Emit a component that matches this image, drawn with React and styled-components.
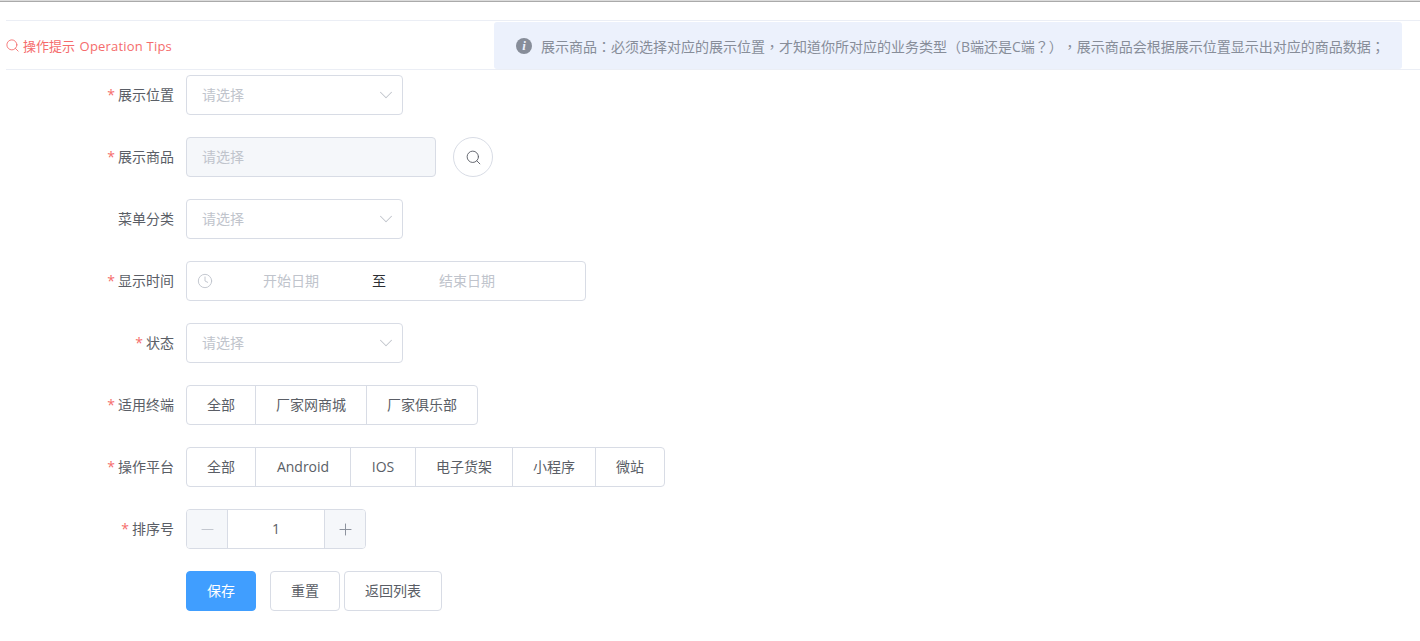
import styled, { createGlobalStyle } from "styled-components";
import { Search, ChevronDown, Clock, Minus, Plus } from "lucide-react";

const GlobalStyle = createGlobalStyle`
  html, body {
    margin: 0;
    padding: 0;
    background: #fff;
  }
  body {
    font-family: "Open Sans", "Noto Sans CJK SC", sans-serif;
    font-size: 14px;
    color: #606266;
    text-spacing-trim: space-all;
  }
  * {
    box-sizing: border-box;
  }
`;

const Page = styled.div`
  height: 641px;
  overflow: hidden;
  border-top: 1px solid #dcdcdc;
`;

const TopLine = styled.div`
  height: 1px;
  background: #aaa;
`;

const TipsBar = styled.div`
  display: flex;
  align-items: center;
  justify-content: space-between;
  height: 50px;
  margin: 18px 0 5px 6px;
  padding: 1px 18px 0 0;
  border-top: 1px solid #ebeef5;
  border-bottom: 1px solid #ebeef5;
`;

const TipsTitle = styled.div`
  display: flex;
  align-items: center;
  gap: 3px;
  margin-left: -1px;
  color: #f56c6c;
  font-size: 13px;
  line-height: 18px;
`;

const TipsLatin = styled.span`
  margin-left: 1px;
  letter-spacing: 0.2px;
`;

const Alert = styled.div`
  display: flex;
  align-items: center;
  gap: 9px;
  width: 908px;
  height: 47px;
  padding: 0 0 0 22px;
  background: #ecf1fc;
  border-radius: 3px;
  color: #878d99;
  font-family: "Open Sans", "Noto Sans CJK TC", sans-serif;
  font-size: 14px;
  white-space: nowrap;
`;

const InfoDot = styled.span`
  display: flex;
  align-items: center;
  justify-content: center;
  width: 16px;
  height: 16px;
  border-radius: 50%;
  background: #878d99;
  color: #ecf1fc;
  font-family: "Liberation Serif", serif;
  font-style: italic;
  font-weight: 700;
  font-size: 13px;
`;

const Form = styled.div`
  display: flex;
  flex-direction: column;
  gap: 22px;
`;

const Row = styled.div`
  display: flex;
  align-items: center;
  height: 40px;
`;

const Label = styled.label`
  flex: none;
  width: 174px;
  margin-right: 12px;
  padding-bottom: 2px;
  text-align: right;
  font-size: 14px;
  color: #5a5e66;
  white-space: nowrap;

  ${(p) => p.$required && `
    &::before {
      content: "*";
      color: #f56c6c;
      margin-right: 3px;
    }
  `}
`;

const Field = styled.div`
  display: flex;
  align-items: center;
  justify-content: space-between;
  width: ${(p) => p.$width}px;
  height: 40px;
  padding: 0 5px 2px 15px;
  border: 1px solid #d8dce5;
  border-radius: 4px;
  background: ${(p) => (p.$disabled ? "#f5f7fa" : "#fff")};
  color: #c0c4cc;
  font-size: 14px;
`;

const Arrow = styled(ChevronDown)`
  margin-top: 2px;
`;

const SearchButton = styled.button`
  display: flex;
  align-items: center;
  justify-content: center;
  width: 40px;
  height: 40px;
  margin-left: 17px;
  padding: 0;
  border: 1px solid #d8dce5;
  border-radius: 50%;
  background: #fff;
  color: #5a5e66;
`;

const DateRange = styled.div`
  display: flex;
  align-items: center;
  width: 400px;
  height: 40px;
  padding: 0 10px 2px;
  border: 1px solid #d8dce5;
  border-radius: 4px;
  color: #c0c4cc;
  font-size: 14px;
`;

const ClockIcon = styled(Clock)`
  flex: none;
  margin-top: 2px;
`;

const DatePart = styled.span`
  width: 156px;
  text-align: center;
`;

const DateSep = styled.span`
  width: 20px;
  text-align: center;
  color: #2d2f33;
`;

const RadioGroup = styled.div`
  display: flex;
  height: 40px;
  border: 1px solid #d8dce5;
  border-radius: 4px;
`;

const RadioItem = styled.div`
  display: flex;
  align-items: center;
  justify-content: center;
  width: ${(p) => p.$width}px;
  padding-bottom: 2px;
  font-size: 14px;
  color: #5a5e66;

  & + & {
    border-left: 1px solid #d8dce5;
  }
`;

const Stepper = styled.div`
  display: flex;
  width: 180px;
  height: 40px;
  border: 1px solid #d8dce5;
  border-radius: 4px;
  overflow: hidden;
`;

const StepButton = styled.div`
  display: flex;
  align-items: center;
  justify-content: center;
  width: 40px;
  background: #f5f7fa;
  color: ${(p) => (p.$muted ? "#c0c4cc" : "#878d99")};
`;

const StepValue = styled.div`
  display: flex;
  flex: 1;
  align-items: center;
  justify-content: center;
  padding-bottom: 2px;
  border-left: 1px solid #d8dce5;
  border-right: 1px solid #d8dce5;
  font-size: 14px;
  color: #5a5e66;
`;

const Actions = styled.div`
  display: flex;
  margin-left: 186px;
`;

const Button = styled.button`
  width: ${(p) => p.$width}px;
  height: 40px;
  margin-left: ${(p) => p.$gap || 0}px;
  padding: 0 0 2px;
  border: 1px solid ${(p) => (p.$primary ? "#409eff" : "#d8dce5")};
  border-radius: 4px;
  background: ${(p) => (p.$primary ? "#409eff" : "#fff")};
  color: ${(p) => (p.$primary ? "#fff" : "#5a5e66")};
  font-family: inherit;
  font-size: 14px;
`;

function Select({ width = 217 }) {
  return (
    <Field $width={width}>
      请选择
      <Arrow size={22} strokeWidth={1.1} color="#c0c4cc" />
    </Field>
  );
}

function Radios({ items }) {
  return (
    <RadioGroup>
      {items.map(([text, width]) => (
        <RadioItem key={text} $width={width}>
          {text}
        </RadioItem>
      ))}
    </RadioGroup>
  );
}

const terminals = [
  ["全部", 68],
  ["厂家网商城", 111],
  ["厂家俱乐部", 111],
];

const platforms = [
  ["全部", 68],
  ["Android", 95],
  ["IOS", 65],
  ["电子货架", 97],
  ["小程序", 83],
  ["微站", 69],
];

export default function App() {
  return (
    <Page>
      <GlobalStyle />
      <TopLine />
      <TipsBar>
        <TipsTitle>
          <Search size={15} strokeWidth={1.4} />
          <span>
            操作提示<TipsLatin> Operation Tips</TipsLatin>
          </span>
        </TipsTitle>
        <Alert>
          <InfoDot>i</InfoDot>
          展示商品：必须选择对应的展示位置，才知道你所对应的业务类型（B端还是C端？），展示商品会根据展示位置显示出对应的商品数据；
        </Alert>
      </TipsBar>
      <Form>
        <Row>
          <Label $required>展示位置</Label>
          <Select />
        </Row>
        <Row>
          <Label $required>展示商品</Label>
          <Field $width={250} $disabled>
            请选择
          </Field>
          <SearchButton>
            <Search size={17} strokeWidth={1.3} />
          </SearchButton>
        </Row>
        <Row>
          <Label>菜单分类</Label>
          <Select />
        </Row>
        <Row>
          <Label $required>显示时间</Label>
          <DateRange>
            <ClockIcon size={16} strokeWidth={1.4} />
            <DatePart>开始日期</DatePart>
            <DateSep>至</DateSep>
            <DatePart>结束日期</DatePart>
          </DateRange>
        </Row>
        <Row>
          <Label $required>状态</Label>
          <Select />
        </Row>
        <Row>
          <Label $required>适用终端</Label>
          <Radios items={terminals} />
        </Row>
        <Row>
          <Label $required>操作平台</Label>
          <Radios items={platforms} />
        </Row>
        <Row>
          <Label $required>排序号</Label>
          <Stepper>
            <StepButton $muted>
              <Minus size={19} strokeWidth={1.2} />
            </StepButton>
            <StepValue>1</StepValue>
            <StepButton>
              <Plus size={19} strokeWidth={1.2} />
            </StepButton>
          </Stepper>
        </Row>
        <Actions>
          <Button $primary $width={70}>
            保存
          </Button>
          <Button $width={70} $gap={14}>
            重置
          </Button>
          <Button $width={98} $gap={4}>
            返回列表
          </Button>
        </Actions>
      </Form>
    </Page>
  );
}
